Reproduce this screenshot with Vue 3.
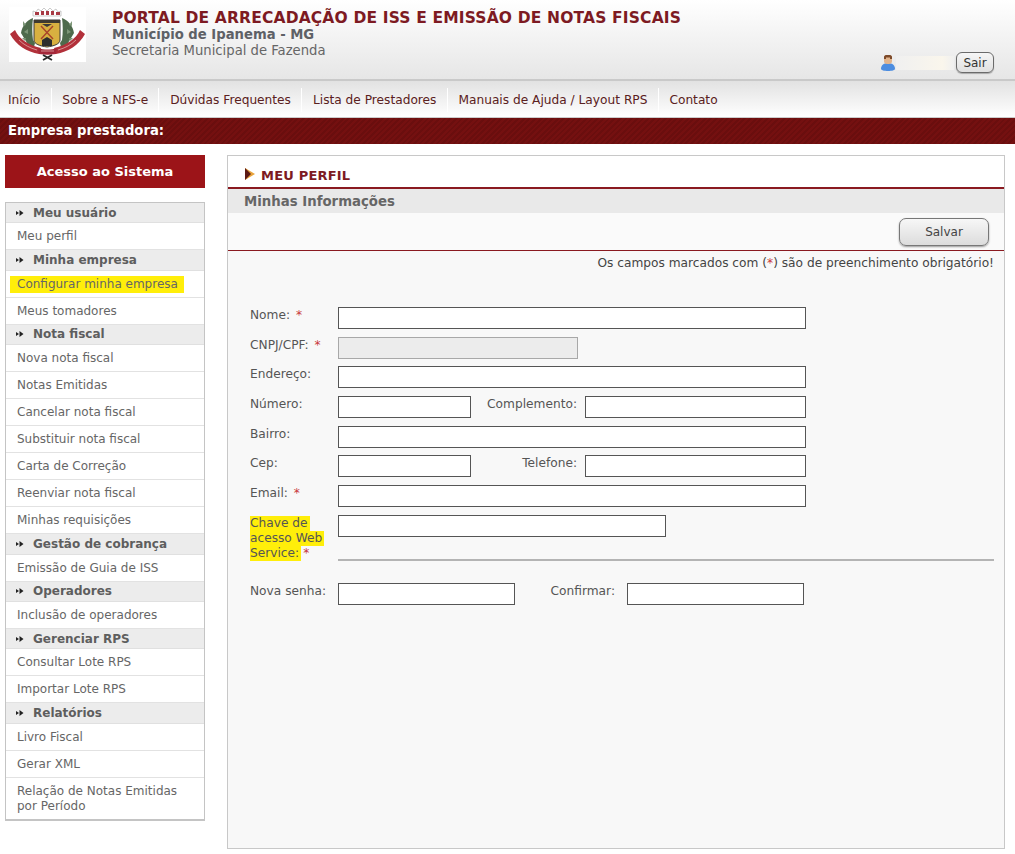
<script setup>
const nav = ['Início', 'Sobre a NFS-e', 'Dúvidas Frequentes', 'Lista de Prestadores', 'Manuais de Ajuda / Layout RPS', 'Contato']
const menu = [
  { t: 'Meu usuário', items: ['Meu perfil'] },
  { t: 'Minha empresa', items: ['Configurar minha empresa', 'Meus tomadores'] },
  { t: 'Nota fiscal', items: ['Nova nota fiscal', 'Notas Emitidas', 'Cancelar nota fiscal', 'Substituir nota fiscal', 'Carta de Correção', 'Reenviar nota fiscal', 'Minhas requisições'] },
  { t: 'Gestão de cobrança', items: ['Emissão de Guia de ISS'] },
  { t: 'Operadores', items: ['Inclusão de operadores'] },
  { t: 'Gerenciar RPS', items: ['Consultar Lote RPS', 'Importar Lote RPS'] },
  { t: 'Relatórios', items: ['Livro Fiscal', 'Gerar XML', 'Relação de Notas Emitidas por Período'] }
]
</script>

<template>
  <div class="page">
    <header class="top">
      <div class="logo">
        <svg width="77" height="55" viewBox="0 0 77 55">
          <rect width="77" height="55" fill="#fff" />
          <path d="M24 9V4l3 1 2-3 3 2 3-3 3 3 3-3 3 3 3-2 2 3 3-1v5z" fill="#fff" stroke="#a8a8a8" stroke-width="0.600" />
          <path d="M26 5h4v3h-4zM32 4h3v4h-3zM37 4h3v4h-3zM42 4h3v4h-3zM47 5h4v3h-4z" fill="#a83a44" />
          <path d="M24 11c-6 2-11 8-12 15l6 10c2 2 5 3 7 4l1-4-2-3c-1-7-1-15 0-22z" fill="#4e6a4c" />
          <path d="M53 11c6 2 11 8 12 15l-6 10c-2 2-5 3-7 4l-1-4 2-3c1-7 1-15 0-22z" fill="#4e6a4c" />
          <path d="M14 14l3 4-3 1zM19 22l-4 3 4 2zM17 31l-4 0 3 3zM63 14l-3 4 3 1zM58 22l4 3-4 2zM60 31l4 0-3 3z" fill="#7d9678" />
          <path d="M25 13h26v20c0 4-6 6-13 7-7-1-13-3-13-7z" fill="#d8b040" stroke="#3a3a3a" stroke-width="1" />
          <path d="M25 13h26v3H25z" fill="#3e3a30" />
          <path d="M32 19l12 13M44 19L32 32" stroke="#a8432a" stroke-width="1.400" />
          <path d="M33 17h10l-5 3z" fill="#3a3a3a" />
          <path d="M33 33l5-3 5 3v6h-10z" fill="#2e2e2e" />
          <path d="M1 27l5-4c4 9 13 15 26 18l-2 6C18 45 7 38 1 27z" fill="#b2303a" />
          <path d="M76 27l-5-4c-4 9-13 15-26 18l2 6c12-2 23-9 29-20z" fill="#b2303a" />
          <path d="M29 41c6 2 13 2 19 0l-1 6c-6 1-11 1-17 0z" fill="#a4283a" />
          <path d="M10 33c5 5 11 8 18 10M67 33c-5 5-11 8-18 10M32 44h13" stroke="#e0a8a8" stroke-width="0.800" fill="none" />
          <path d="M34 48l9 5M43 48l-9 5" stroke="#2a2a2a" stroke-width="1.800" />
        </svg>
      </div>
      <div class="titles">
        <h1>PORTAL DE ARRECADAÇÃO DE ISS E EMISSÃO DE NOTAS FISCAIS</h1>
        <p class="city">Município de Ipanema - MG</p>
        <p class="dept">Secretaria Municipal de Fazenda</p>
      </div>
      <div class="user">
        <svg width="16" height="17" viewBox="0 0 16 17">
          <path d="M1 15c0-4 3-6 7-6s7 2 7 6c0 1-3 2-7 2s-7-1-7-2z" fill="#4d8de0" />
          <rect x="4" y="1" width="8" height="9" rx="3" fill="#e2b48c" />
          <path d="M4 5V3c0-1 1-2 2-2h4c1 0 2 1 2 2v2H10V3.500H6V5z" fill="#7c4a2a" />
        </svg>
        <span class="smear"></span>
        <button class="sair">Sair</button>
      </div>
    </header>

    <nav class="nav">
      <a v-for="n in nav" :key="n">{{ n }}</a>
    </nav>

    <div class="bar">Empresa prestadora:</div>

    <div class="body">
      <aside class="side">
        <div class="access">Acesso ao Sistema</div>
        <div class="menu">
          <template v-for="g in menu" :key="g.t">
            <div class="group">
              <svg width="8" height="6" viewBox="0 0 8 6"><path d="M0 1l3 2-3 2zM3.500 0l4 3-4 3z" fill="#222" /></svg>
              <span>{{ g.t }}</span>
            </div>
            <a v-for="i in g.items" :key="i" class="item" :class="{ mark: i === 'Configurar minha empresa' }"><span>{{ i }}</span></a>
          </template>
        </div>
      </aside>

      <main class="panel">
        <div class="ptitle">
          <svg width="10" height="12" viewBox="0 0 10 12"><path d="M0 0l10 6-10 6z" fill="#e8a33c" /><path d="M0 0l6 6-6 6z" fill="#5c1a14" /></svg>
          <span>MEU PERFIL</span>
        </div>
        <div class="sub">Minhas Informações</div>
        <div class="actions"><button class="salvar">Salvar</button></div>
        <div class="note">Os campos marcados com (<b>*</b>) são de preenchimento obrigatório!</div>

        <form class="form" @submit.prevent>
          <div class="row">
            <label>Nome: <b>*</b></label>
            <input class="w-full" />
          </div>
          <div class="row">
            <label>CNPJ/CPF: <b>*</b></label>
            <input class="w-cnpj" disabled />
          </div>
          <div class="row">
            <label>Endereço:</label>
            <input class="w-full" />
          </div>
          <div class="row">
            <label>Número:</label>
            <input class="w-short" />
            <label class="second">Complemento:</label>
            <input class="w-comp" />
          </div>
          <div class="row">
            <label>Bairro:</label>
            <input class="w-full" />
          </div>
          <div class="row">
            <label>Cep:</label>
            <input class="w-short" />
            <label class="second">Telefone:</label>
            <input class="w-comp" />
          </div>
          <div class="row">
            <label>Email: <b>*</b></label>
            <input class="w-full" />
          </div>
          <div class="row chave">
            <label><mark>Chave de acesso Web Service:</mark><b>*</b></label>
            <input class="w-chave" />
          </div>
          <hr />
          <div class="row">
            <label>Nova senha:</label>
            <input class="w-pass" />
            <label class="third">Confirmar:</label>
            <input class="w-pass" />
          </div>
        </form>
      </main>
    </div>
  </div>
</template>

<style>
html, body { margin: 0; background: #fff; }
</style>

<style scoped>
.page { width: 1015px; height: 854px; overflow: hidden; font-family: Verdana, "DejaVu Sans", sans-serif; font-size: 12px; color: #555; }
.top { height: 81px; box-sizing: border-box; display: flex; background: linear-gradient(#fff, #e6e6e6); border-bottom: 2px solid #c9c9c9; position: relative; }
.logo { margin: 7px 0 0 9px; width: 77px; height: 55px; }
.titles { margin: 10px 0 0 26px; }
h1 { margin: 0; font-size: 15.500px; line-height: 17px; font-weight: bold; color: #7d1a22; letter-spacing: 0.160px; white-space: nowrap; }
.city { margin: 0; font-weight: bold; font-size: 13.200px; line-height: 16px; color: #5e6166; }
.dept { margin: 0; font-size: 13.200px; line-height: 16px; color: #666; }
.user { position: absolute; top: 52px; left: 880px; display: flex; align-items: center; }
.smear { width: 58px; height: 14px; background: linear-gradient(90deg, #f0f0f0, #faf6ec 80%, #f0f0f0); }
.sair { width: 38px; height: 21px; padding: 0; margin-left: 2px; border: 1px solid #6b6b6b; border-radius: 6px; background: linear-gradient(#f6f6f6, #e0e0e0); font: 12px Verdana, "DejaVu Sans", sans-serif; color: #333; box-shadow: 0 1px 1px #aaa; }
.nav { height: 37px; box-sizing: border-box; display: flex; align-items: center; font-size: 12.200px; background: linear-gradient(#e2e2e2, #f6f6f6 70%, #fff); border-bottom: 1px solid #ccc; padding-top: 2px; }
.nav a { padding: 0 10.300px 0 10.700px; height: 24px; line-height: 24px; color: #5a2020; border-right: 1px solid #fff; white-space: nowrap; }
.nav a:first-child { padding-left: 8px; }
.nav a:last-child { border-right: 0; }
.bar { height: 26px; box-sizing: border-box; padding-left: 8px; line-height: 25px; font-size: 13.200px; font-weight: bold; color: #fff; background: repeating-linear-gradient(135deg, #741010 0 2px, #6a0e0e 2px 4px); }
.body { display: flex; align-items: flex-start; padding: 11px 10px 0 5px; }
.side { width: 200px; flex: none; }
.access { height: 33px; line-height: 33px; text-align: center; background: #9c1418; color: #fff; font-size: 13px; font-weight: bold; }
.menu { margin-top: 14px; border: 1px solid #c4c4c4; border-bottom-width: 2px; background: #fff; }
.group { height: 20.400px; box-sizing: border-box; padding-left: 10px; display: flex; align-items: center; background: #ececec; border-bottom: 1px solid #e0e0e0; font-size: 12px; font-weight: bold; color: #5e5e5e; }
.group svg { margin-right: 9px; }
.item { display: block; padding: 6px 10px 5px 11px; line-height: 15px; color: #666; border-bottom: 1px solid #e2e2e2; }
.item:last-child { border-bottom: 0; }
.item.mark span { background: #ffee0a; padding: 1px 6px 2px 7px; margin-left: -7px; }
.panel { margin-left: 22px; width: 778px; height: 694px; box-sizing: border-box; border: 1px solid #c8c8c8; background: #f8f8f8; }
.ptitle { height: 33px; box-sizing: border-box; padding: 12px 0 0 17px; display: flex; align-items: flex-start; background: #fff; border-bottom: 2px solid #8a1a20; color: #7d1a22; font-size: 13px; font-weight: bold; }
.ptitle svg { margin-right: 6px; }
.ptitle span { line-height: 15px; letter-spacing: 0.200px; }
.sub { height: 24px; box-sizing: border-box; padding-left: 16px; line-height: 25px; background: #e9e9e9; font-size: 13.300px; font-weight: bold; color: #666; }
.actions { height: 38px; box-sizing: border-box; display: flex; justify-content: flex-end; padding: 5px 15px 0 0; background: #fafafa; border-bottom: 1px solid #8a1a20; }
.salvar { width: 90px; height: 28px; padding: 0; border: 1px solid #777; border-radius: 7px; background: linear-gradient(#f7f7f7, #dcdcdc); color: #444; font: 12px Verdana, "DejaVu Sans", sans-serif; box-shadow: 0 1px 2px #999; }
.note { margin: 5px 10px 0 0; text-align: right; line-height: 14px; font-size: 12.200px; color: #444; }
.note b, label b { font-weight: normal; color: #c8383c; }
label b { margin-left: 2px; }
.form { margin: 37px 10px 0 22px; }
.row { display: flex; align-items: flex-start; height: 22px; margin-bottom: 7.700px; }
label { width: 88px; flex: none; margin-top: 1px; line-height: 15px; font-size: 12.200px; color: #555; }
label.second { width: 98px; margin-left: 8px; text-align: right; margin-right: 8px; }
label.third { width: 88px; margin-left: 12px; text-align: right; margin-right: 12px; }
input { box-sizing: border-box; height: 22px; margin: 0; padding: 0 3px; border: 1px solid #555; background: #fff; border-radius: 0; }
input[disabled] { background: #ececec; border-color: #a8a8a8; }
.w-full { width: 468px; }
.w-cnpj { width: 240px; }
.w-short { width: 133px; }
.w-comp { width: 221px; }
.w-chave { width: 328px; }
.w-pass { width: 177px; }
.row.chave { height: auto; margin: 0; }
mark { background: #ffee0a; color: #555; padding: 0 2px 1px 0; box-decoration-break: clone; -webkit-box-decoration-break: clone; }
hr { margin: -2px 0 22px 88px; height: 0; border: 0; border-top: 2px solid #b4b4b4; }
</style>
